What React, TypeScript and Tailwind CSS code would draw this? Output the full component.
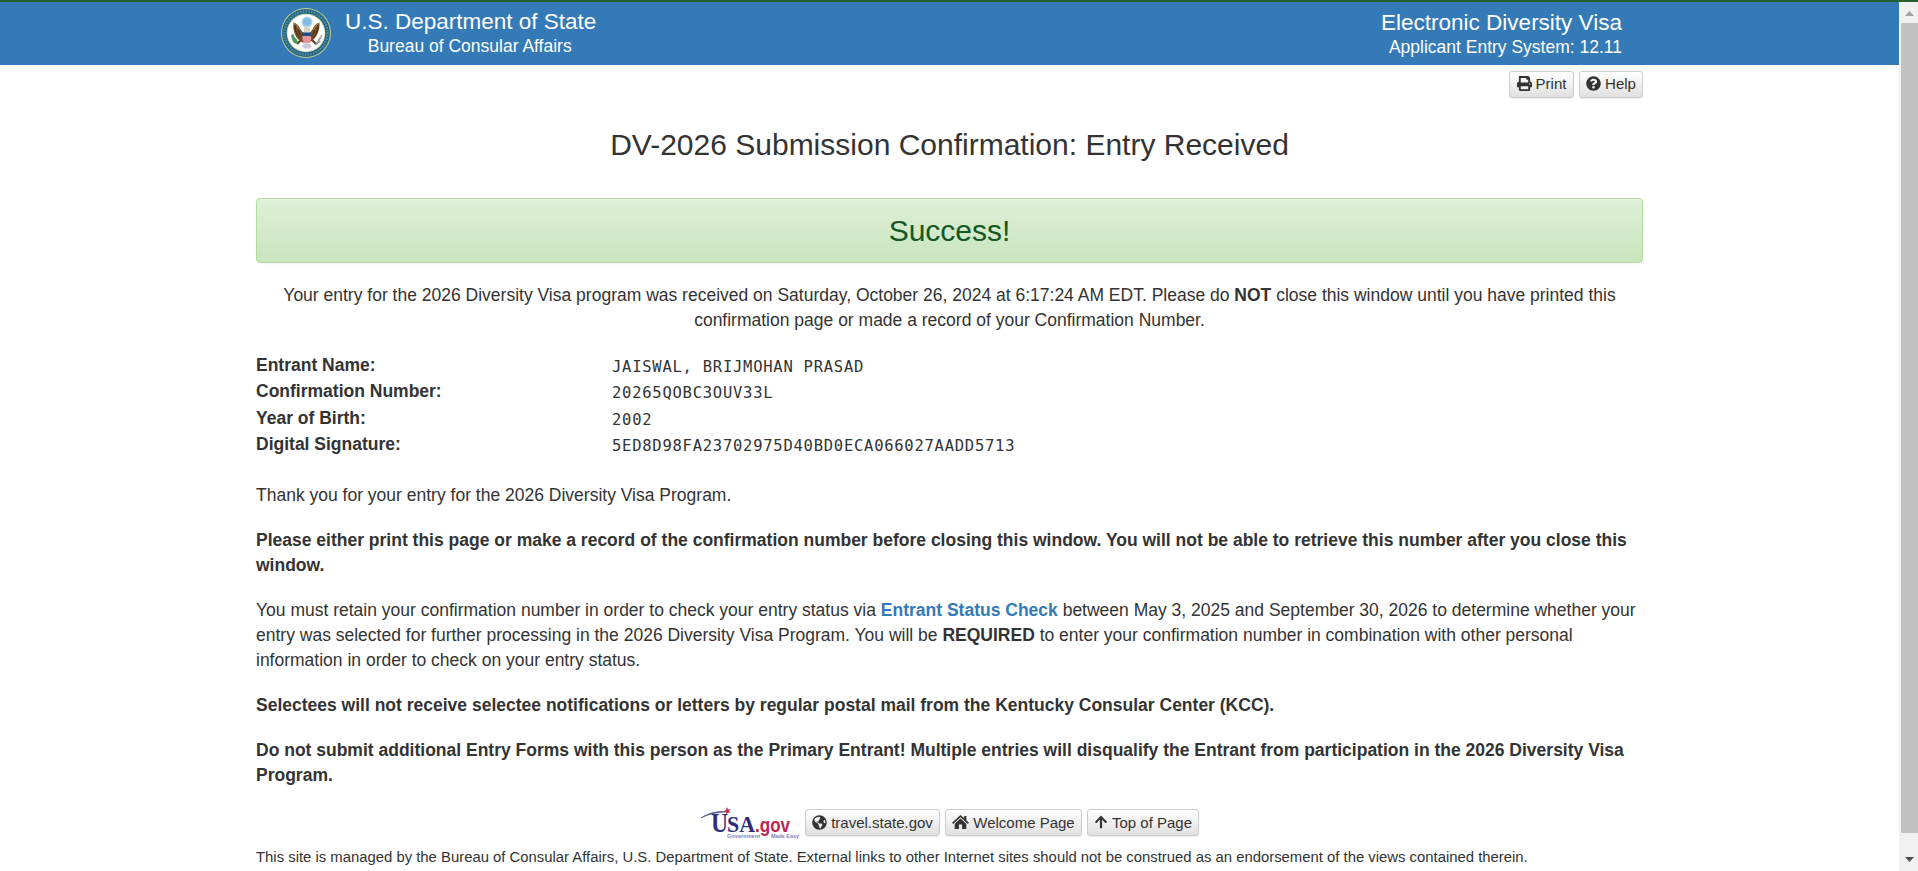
import React from "react";
import { FaPrint, FaQuestionCircle, FaGlobeAmericas, FaArrowUp } from "react-icons/fa";

function Seal() {
  return (
    <svg viewBox="0 0 50 50" className="h-[50px] w-[50px]">
      <circle cx="25" cy="25" r="25" fill="#c6cc8f" />
      <circle cx="25" cy="25" r="24" fill="#23688c" />
      <circle cx="25" cy="25" r="21.600" fill="none" stroke="#5f9191" strokeWidth="2.200" strokeDasharray="1.300 1.500" />
      <circle cx="25" cy="25" r="19.300" fill="#cfd3a0" />
      <circle cx="25" cy="25" r="18.500" fill="#fff" />
      <circle cx="26" cy="14" r="5.500" fill="#a9d3ee" />
      <circle cx="26" cy="14" r="3.800" fill="#7fbce4" />
      <path d="M12.500 14.500c-.8 6 .5 13 5.500 17.500l3.500 2.500h7L32 32c5-4.500 7-11.500 6.500-17.500-3 .5-5.500 3-7 7l-2.500 3h-7l-2.500-3c-1.500-4-4-6.500-7-7z" fill="#77502c" />
      <path d="M14 17c0 6 2 10 5 13M17 19c.3 4 1.500 7 3.500 9M37 17c0 6-2 10-5 13M34 19c-.3 4-1.500 7-3.500 9" stroke="#40270f" strokeWidth="1" fill="none" />
      <path d="M13 15c2 1 4 4 5.500 7M38 15c-2 1-4 4-5.500 7" stroke="#b98f56" strokeWidth="1" fill="none" />
      <path d="M23 25v-4c0-2 1-3 3-3s3 1 3 3l-.5 4z" fill="#ddd3c3" />
      <path d="M21.500 24.500h8.500V28h-8.500z" fill="#1f4e8a" />
      <path d="M21.500 28h8.500v3.500c0 2-2 3-4.200 4-2.300-1-4.300-2-4.300-4z" fill="#e8929c" />
      <path d="M20 32l-4 4M31 32l4 4" stroke="#6b3f1d" strokeWidth="2.200" />
      <path d="M10 27l2.500-1 1 3 2 2 1.500 3-1.500 2-3-1.500-1.500-3z" fill="#4a9c61" />
      <path d="M41 27l-6 9M39.500 33l-5 4M40 30l-6 7" stroke="#9298a0" strokeWidth="1.100" />
      <path d="M21 38l2-2.500h5.500L31 38l-2.500 2.500h-5z" fill="#c9cad6" />
    </svg>
  );
}

function UsaGov() {
  return (
    <svg viewBox="0 0 100 32" className="mr-[5px] h-8 w-[100px]">
      <path d="M1 11C8 6.500 15 3.800 28 4.800 17 5 9 7 1 11z" fill="#3c3f86" stroke="#3c3f86" strokeWidth=".6" />
      <path d="M27 0l1 2.400 2.600-.5-1.600 2 1.500 2.200-2.600-.5-1.400 2-.5-2.500-2.600-.7 2.400-1.200z" fill="#d0243f" />
      <text x="11" y="24.500" fontFamily="Liberation Serif, serif" fontWeight="700" fontSize="27" textLength="17" lengthAdjust="spacingAndGlyphs" fill="#2c2f78">U</text>
      <text x="27" y="24.500" fontFamily="Liberation Serif, serif" fontWeight="700" fontSize="23" textLength="28" lengthAdjust="spacingAndGlyphs" fill="#2c2f78">SA</text>
      <text x="55" y="24.500" fontFamily="Liberation Sans, sans-serif" fontWeight="700" fontSize="20" textLength="35" lengthAdjust="spacingAndGlyphs" fill="#bf2450">.gov</text>
      <text x="27" y="30.500" fontFamily="Liberation Sans, sans-serif" fontWeight="700" fontSize="5.500" textLength="33" fill="#8082ba">Government</text>
      <text x="71" y="30.500" fontFamily="Liberation Sans, sans-serif" fontWeight="700" fontSize="5.500" textLength="28" fill="#8082ba">Made Easy</text>
    </svg>
  );
}

function HomeIcon() {
  return (
    <svg viewBox="0 0 17 14" className="h-[14px] w-[17px]" fill="#333">
      <path d="M8.500 0L0 7.700l1.100 1.200 7.400-6.600 7.400 6.600L17 7.700l-2.600-2.400V1h-2.200v2.300z" />
      <path d="M8.500 3.600L2.700 8.800V14h4.200V9.500h3.200V14h4.200V8.800z" />
    </svg>
  );
}

function Btn({ icon, label, className }: { icon: React.ReactNode; label: string; className: string }) {
  return (
    <button
      className={
        "flex h-[27px] items-center justify-center gap-1 rounded-[3px] border border-[#ccc] bg-linear-to-b from-white to-[#e0e0e0] text-[15px] whitespace-nowrap shadow-[0_1px_1px_rgba(0,0,0,0.075)] " +
        className
      }
    >
      {icon}
      {label}
    </button>
  );
}

const details = [
  ["Entrant Name:", "JAISWAL, BRIJMOHAN PRASAD"],
  ["Confirmation Number:", "20265QOBC3OUV33L"],
  ["Year of Birth:", "2002"],
  ["Digital Signature:", "5ED8D98FA23702975D40BD0ECA066027AADD5713"],
];

export default function App() {
  return (
    <div className="flex h-[871px] overflow-hidden border-t-2 border-[#275e2d] bg-white font-['Liberation_Sans',Arial,sans-serif] text-[17.5px] leading-[25px] text-[#333]">
      <div className="w-[1899px] shrink-0">
        <header className="flex h-[63px] justify-between bg-[#337ab7] pr-[277px] pl-[281px] text-white">
          <div className="flex pt-[6px]">
            <Seal />
            <div className="ml-[14px] pt-px text-center">
              <div className="text-[22.5px] leading-[25px]">U.S. Department of State</div>
              <div className="pr-0.5">Bureau of Consular Affairs</div>
            </div>
          </div>
          <div className="pt-2 text-right">
            <div className="text-[22.5px] leading-[25px]">Electronic Diversity Visa</div>
            <div>Applicant Entry System: 12.11</div>
          </div>
        </header>
        <main className="px-64">
          <div className="flex justify-end gap-[5px] pt-[6px]">
            <Btn className="w-[65px] pb-[3px]" icon={<FaPrint size={15} />} label="Print" />
            <Btn className="w-[64px] pb-[3px]" icon={<FaQuestionCircle size={15} />} label="Help" />
          </div>
          <h1 className="mt-[30px] text-center text-[30px] leading-[34px]">DV-2026 Submission Confirmation: Entry Received</h1>
          <div className="mt-[36px] flex h-[65px] items-center justify-center rounded-[4px] border border-[#b2dba1] bg-linear-to-b from-[#dff0d8] to-[#c8e5bc] text-[30px] text-[#155724] shadow-[inset_0_1px_0_rgba(255,255,255,0.25),0_1px_2px_rgba(0,0,0,0.05)]">
            Success!
          </div>
          <p className="mt-5 text-center">
            Your entry for the 2026 Diversity Visa program was received on Saturday, October 26, 2024 at 6:17:24 AM EDT. Please do <b>NOT</b> close this window until you have printed this
            <br />
            confirmation page or made a record of your Confirmation Number.
          </p>
          <dl className="mt-5 h-[130px]">
            {details.map(([k, v]) => (
              <div key={k} className="flex h-[26.4px]">
                <dt className="w-[356px] font-bold">{k}</dt>
                <dd className="pt-0.5 font-['DejaVu_Sans_Mono',monospace] text-[15.5px] tracking-[0.75px]">{v}</dd>
              </div>
            ))}
          </dl>
          <div className="flex flex-col gap-5">
            <p>Thank you for your entry for the 2026 Diversity Visa Program.</p>
            <p className="font-bold">
              Please either print this page or make a record of the confirmation number before closing this window. You will not be able to retrieve this number after you close this window.
            </p>
            <p>
              You must retain your confirmation number in order to check your entry status via <a className="font-bold text-[#337ab7]">Entrant Status Check</a> between May 3, 2025 and September 30, 2026 to determine whether your entry was selected for further processing in the 2026 Diversity Visa Program. You will be <b>REQUIRED</b> to enter your confirmation number in combination with other personal information in order to check on your entry status.
            </p>
            <p className="font-bold">Selectees will not receive selectee notifications or letters by regular postal mail from the Kentucky Consular Center (KCC).</p>
            <p className="font-bold">
              Do not submit additional Entry Forms with this person as the Primary Entrant! Multiple entries will disqualify the Entrant from participation in the 2026 Diversity Visa Program.
            </p>
          </div>
          <footer>
            <div className="mt-[19px] flex h-[31px] items-center justify-center gap-[5px]">
              <UsaGov />
              <Btn className="-ml-[5px] w-[135px] pb-px" icon={<FaGlobeAmericas size={15} />} label="travel.state.gov" />
              <Btn className="w-[137px] pb-px" icon={<HomeIcon />} label="Welcome Page" />
              <Btn className="w-[112px] pb-px" icon={<FaArrowUp size={14} />} label="Top of Page" />
            </div>
            <p className="mt-[7px] text-[14.87px]">
              This site is managed by the Bureau of Consular Affairs, U.S. Department of State. External links to other Internet sites should not be construed as an endorsement of the views contained therein.
            </p>
          </footer>
        </main>
      </div>
      <div className="flex w-[19px] shrink-0 flex-col items-center justify-between bg-[#f1f1f1] pl-0.5">
        <svg viewBox="0 0 17 21" className="h-[21px] w-[17px]"><path d="M4 14l4.500-5 4.500 5z" fill="#a3a3a3" /></svg>
        <div className="w-full flex-1 bg-[#c1c1c1]" />
        <svg viewBox="0 0 17 38" className="h-[38px] w-[17px]"><path d="M4 24h9l-4.500 5z" fill="#505050" /></svg>
      </div>
    </div>
  );
}
